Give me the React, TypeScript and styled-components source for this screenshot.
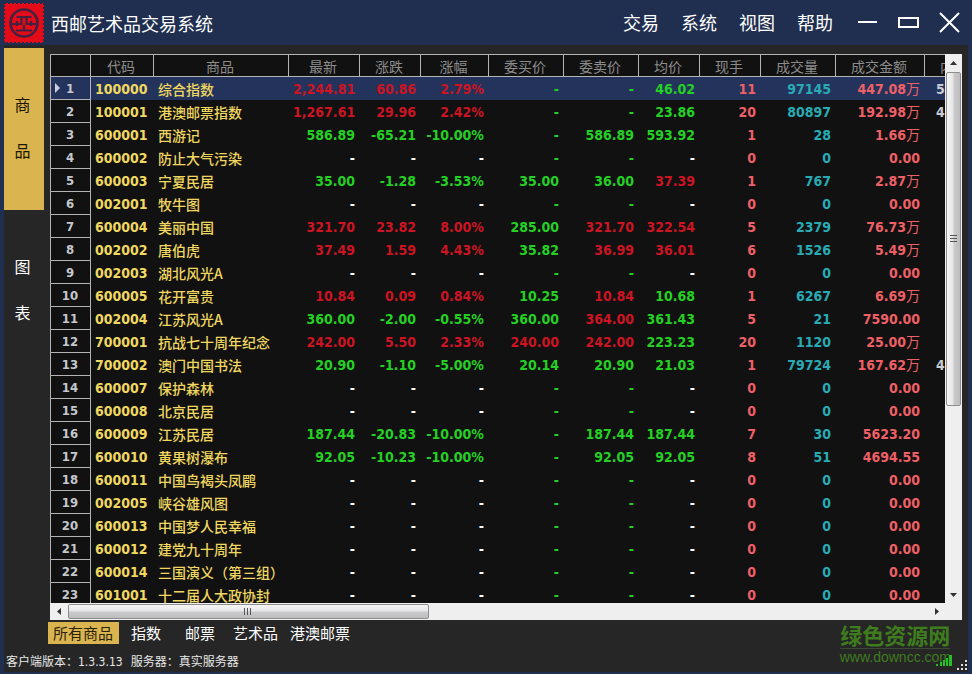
import React from "react";
import styled, { createGlobalStyle } from "styled-components";

const cjk = `"Noto Sans CJK SC", sans-serif`;

const GlobalStyle = createGlobalStyle`
  * { box-sizing: border-box; }
  body { margin: 0; background: #202f50; font-family: ${cjk}; }
  button { font-family: inherit; border: 0; padding: 0; margin: 0; background: none; color: inherit; }
`;

const Window = styled.div`
  height: 100vh;
  display: flex;
  flex-direction: column;
  padding: 0 4px 2px;
  background: #202f50;
  color: #fff;
  overflow: hidden;
`;

const TitleBar = styled.header`
  height: 45px;
  flex: none;
  display: flex;
  align-items: center;
  padding-right: 7px;
  svg { display: block; }
`;

const Title = styled.h1`
  margin: 0 auto 0 7px;
  font-size: 18px;
  line-height: 24px;
  font-weight: 400;
`;

const Menu = styled.nav`
  display: flex;
  gap: 22px;
  margin-right: 24px;
  padding-bottom: 2px;
  button { font-size: 18px; line-height: 24px; }
`;

const WindowButtons = styled.div`
  display: flex;
  gap: 20px;
`;

const Content = styled.div`
  flex: 1;
  min-height: 0;
  display: flex;
  gap: 6px;
  padding: 3px 6px 0 0;
  background: #262626;
`;

const SideBar = styled.nav`
  width: 40px;
  flex: none;
  display: flex;
  flex-direction: column;
`;

const SideTab = styled.button<{ $active?: boolean }>`
  height: 162px;
  display: flex;
  flex-direction: column;
  align-items: center;
  justify-content: center;
  padding: 0 3px 4px 0;
  font-size: 16px;
  line-height: 46px;
  background: ${(p) => (p.$active ? "#d9b44f" : "transparent")};
  color: ${(p) => (p.$active ? "#1c1808" : "#fff")};
`;

const GridFrame = styled.main`
  flex: 1;
  min-width: 0;
  margin-top: 6px;
  display: grid;
  grid-template-columns: minmax(0, 1fr) 17px;
  grid-template-rows: minmax(0, 1fr) 17px;
  background: #efefef;
`;

const GridView = styled.div`
  overflow: hidden;
  background: #111;
`;

const Quotes = styled.table`
  width: 936px;
  table-layout: fixed;
  border-collapse: separate;
  border-spacing: 0;
  font-family: "DejaVu Sans Condensed", "DejaVu Sans", ${cjk};
  font-size: 14px;
  line-height: 22px;
  white-space: nowrap;
`;

const HeadCell = styled.th`
  height: 23px;
  padding: 1px 2px 0 0;
  line-height: 20px;
  font-family: ${cjk};
  font-weight: 400;
  color: #8c8c8c;
  border: solid #b4b4b4;
  border-width: 1px 1px 1px 0;
  &:first-child { border-left-width: 1px; }
`;

const Row = styled.tr<{ $selected?: boolean }>`
  height: 23px;
  background: ${(p) => (p.$selected ? "#24335c" : "transparent")};
`;

const RowHead = styled.th`
  position: relative;
  padding: 2px 1px 0 0;
  font-size: 13px;
  line-height: 20px;
  color: #c4c8ce;
  border: solid #b4b4b4;
  border-width: 0 1px 1px;
`;

const Marker = styled.svg`
  position: absolute;
  left: 4px;
  top: 6px;
`;

const tones = {
  y: "#f0d860",
  r: "#cc1422",
  g: "#24d024",
  w: "#ffffff",
  p: "#ee6066",
  c: "#28abb4",
  s: "#c8ccd4",
};
type Tone = keyof typeof tones;

const Cell = styled.td<{ $tone: Tone; $left?: boolean }>`
  padding: 0 5px 0 4px;
  font-weight: 700;
  text-align: ${(p) => (p.$left ? "left" : "right")};
  color: ${(p) => tones[p.$tone]};
`;

const NameCell = styled(Cell)`
  font-family: ${cjk};
  font-weight: 500;
`;

const InnerCell = styled(Cell)`
  padding-left: 11px;
`;

const Unit = styled.span`
  font-family: ${cjk};
  font-weight: 400;
`;

const VScroll = styled.div`
  display: flex;
  flex-direction: column;
`;

const HScroll = styled.div`
  display: flex;
  grid-column: 1;
`;

const ArrowButton = styled.button`
  width: 17px;
  height: 17px;
  flex: none;
  display: grid;
  place-items: center;
`;

const Track = styled.div<{ $vertical?: boolean }>`
  flex: 1;
  display: flex;
  flex-direction: ${(p) => (p.$vertical ? "column" : "row")};
  padding: ${(p) => (p.$vertical ? "1px 1px 0" : "1px 1px")};
`;

const Thumb = styled.button<{ $vertical?: boolean }>`
  width: ${(p) => (p.$vertical ? "15px" : "42%")};
  height: ${(p) => (p.$vertical ? "65%" : "15px")};
  display: grid;
  place-items: center;
  border: 1px solid #8e8e8e;
  border-radius: 2px;
  background: linear-gradient(${(p) => (p.$vertical ? "90deg" : "180deg")}, #f6f6f6, #e6e6e6 45%, #cacace 55%, #bdbdbd);
`;

const Footer = styled.footer`
  flex: none;
  position: relative;
  background: #262626;
`;

const Tabs = styled.nav`
  display: flex;
  align-items: center;
  height: 28px;
  padding: 2px 0 4px 44px;
`;

const Tab = styled.button<{ $active?: boolean; $wide?: boolean }>`
  height: 22px;
  padding: 0 ${(p) => (p.$active ? 6 : p.$wide ? 12 : 6)}px 0 ${(p) => (p.$active ? 5 : p.$wide ? 12 : 6)}px;
  font-size: 15px;
  line-height: 22px;
  background: ${(p) => (p.$active ? "#d9b44f" : "transparent")};
  color: ${(p) => (p.$active ? "#2a2210" : "#fff")};
`;

const Status = styled.div`
  display: flex;
  gap: 8px;
  padding: 5px 2px 1px;
  height: 24px;
  font-family: "DejaVu Sans Condensed", ${cjk};
  font-size: 12px;
  line-height: 18px;
  color: #e8e8e8;
`;

const Watermark = styled.a`
  position: absolute;
  right: 17px;
  top: 0;
  display: flex;
  flex-direction: column;
  align-items: center;
  color: #3e7c1e;
  text-decoration: none;
`;

const WatermarkName = styled.strong`
  font-size: 22px;
  line-height: 28px;
  border-bottom: 1px solid #3c4a34;
`;

const WatermarkSite = styled.span`
  font-family: "Liberation Sans", sans-serif;
  font-size: 14px;
  line-height: 16px;
`;

const Signal = styled.svg`
  position: absolute;
  right: 15px;
  bottom: 5px;
`;

const Grip = styled.svg`
  position: absolute;
  right: 0;
  bottom: 1px;
`;

const columns: [string, number][] = [
  ["", 41], ["代码", 63], ["商品", 135], ["最新", 71], ["涨跌", 61], ["涨幅", 68],
  ["委买价", 75], ["委卖价", 75], ["均价", 61], ["现手", 61], ["成交量", 75], ["成交金额", 89], ["内盘", 61],
];

type Quote = {
  code: string; name: string;
  trend: Tone; last: string; change: string; percent: string;
  bidTone: Tone; bid: string; askTone: Tone; ask: string; avgTone: Tone; avg: string;
  lots: string; volume: string; amount: string; inner?: string;
};

const idle = (code: string, name: string): Quote => ({
  code, name, trend: "w", last: "-", change: "-", percent: "-",
  bidTone: "g", bid: "-", askTone: "g", ask: "-", avgTone: "w", avg: "-",
  lots: "0", volume: "0", amount: "0.00",
});

const quote = (
  code: string, name: string, trend: Tone, last: string, change: string, percent: string,
  bidTone: Tone, bid: string, askTone: Tone, ask: string, avgTone: Tone, avg: string,
  lots: string, volume: string, amount: string, inner?: string,
): Quote => ({ code, name, trend, last, change, percent, bidTone, bid, askTone, ask, avgTone, avg, lots, volume, amount, inner });

const quotes: Quote[] = [
  quote("100000", "综合指数", "r", "2,244.81", "60.86", "2.79%", "g", "-", "g", "-", "g", "46.02", "11", "97145", "447.08万", "5"),
  quote("100001", "港澳邮票指数", "r", "1,267.61", "29.96", "2.42%", "g", "-", "g", "-", "g", "23.86", "20", "80897", "192.98万", "4"),
  quote("600001", "西游记", "g", "586.89", "-65.21", "-10.00%", "g", "-", "g", "586.89", "g", "593.92", "1", "28", "1.66万"),
  idle("600002", "防止大气污染"),
  quote("600003", "宁夏民居", "g", "35.00", "-1.28", "-3.53%", "g", "35.00", "g", "36.00", "r", "37.39", "1", "767", "2.87万"),
  idle("002001", "牧牛图"),
  quote("600004", "美丽中国", "r", "321.70", "23.82", "8.00%", "g", "285.00", "r", "321.70", "r", "322.54", "5", "2379", "76.73万"),
  quote("002002", "唐伯虎", "r", "37.49", "1.59", "4.43%", "g", "35.82", "r", "36.99", "r", "36.01", "6", "1526", "5.49万"),
  idle("002003", "湖北风光A"),
  quote("600005", "花开富贵", "r", "10.84", "0.09", "0.84%", "g", "10.25", "r", "10.84", "g", "10.68", "1", "6267", "6.69万"),
  quote("002004", "江苏风光A", "g", "360.00", "-2.00", "-0.55%", "g", "360.00", "r", "364.00", "g", "361.43", "5", "21", "7590.00"),
  quote("700001", "抗战七十周年纪念", "r", "242.00", "5.50", "2.33%", "r", "240.00", "r", "242.00", "g", "223.23", "20", "1120", "25.00万"),
  quote("700002", "澳门中国书法", "g", "20.90", "-1.10", "-5.00%", "g", "20.14", "g", "20.90", "g", "21.03", "1", "79724", "167.62万", "4"),
  idle("600007", "保护森林"),
  idle("600008", "北京民居"),
  quote("600009", "江苏民居", "g", "187.44", "-20.83", "-10.00%", "g", "-", "g", "187.44", "g", "187.44", "7", "30", "5623.20"),
  quote("600010", "黄果树瀑布", "g", "92.05", "-10.23", "-10.00%", "g", "-", "g", "92.05", "g", "92.05", "8", "51", "4694.55"),
  idle("600011", "中国鸟褐头凤鹛"),
  idle("002005", "峡谷雄风图"),
  idle("600013", "中国梦人民幸福"),
  idle("600012", "建党九十周年"),
  idle("600014", "三国演义（第三组）"),
  idle("601001", "十二届人大政协封"),
];

const Logo = () => (
  <svg width="40" height="40" viewBox="0 0 40 40" aria-hidden="true">
    <rect width="40" height="40" fill="#e40b18" />
    <rect width="40" height="40" fill="none" stroke="#202f50" strokeWidth="2" strokeDasharray="2 2" />
    <g fill="none" stroke="#45203f" strokeWidth="2.6">
      <circle cx="20" cy="20" r="13.5" />
      <path d="M12.500 14h15M17.500 14v8M22.500 14v8M8 21h9.500M22.500 21H32M13 18v5M27 18v5M20 22v6M12 27.500h16" strokeWidth="2.200" />
    </g>
  </svg>
);

export default function App() {
  return (
    <Window>
      <GlobalStyle />
      <TitleBar>
        <Logo />
        <Title>西邮艺术品交易系统</Title>
        <Menu>
          {["交易", "系统", "视图", "帮助"].map((m) => <button key={m}>{m}</button>)}
        </Menu>
        <WindowButtons>
          <button aria-label="最小化">
            <svg width="21" height="22"><path d="M1 10h19" stroke="#fff" strokeWidth="2" /></svg>
          </button>
          <button aria-label="最大化">
            <svg width="21" height="22"><rect x="1" y="6" width="19" height="9" fill="none" stroke="#fff" strokeWidth="2" /></svg>
          </button>
          <button aria-label="关闭">
            <svg width="22" height="22"><path d="M1 1l19 19M20 1L1 20" stroke="#fff" strokeWidth="2" /></svg>
          </button>
        </WindowButtons>
      </TitleBar>

      <Content>
        <SideBar>
          <SideTab $active><span>商</span><span>品</span></SideTab>
          <SideTab><span>图</span><span>表</span></SideTab>
        </SideBar>
        <GridFrame>
          <GridView>
            <Quotes>
              <colgroup>{columns.map(([label, width]) => <col key={label} width={width} />)}</colgroup>
              <thead>
                <tr>{columns.map(([label]) => <HeadCell key={label} scope="col">{label}</HeadCell>)}</tr>
              </thead>
              <tbody>
                {quotes.map((q, i) => (
                  <Row key={q.code} $selected={i === 0}>
                    <RowHead scope="row">
                      {i === 0 && <Marker width="6" height="10"><path d="M0 0l5 5-5 5z" fill="#c8d0e0" /></Marker>}
                      {i + 1}
                    </RowHead>
                    <Cell $tone="y" $left>{q.code}</Cell>
                    <NameCell $tone="y" $left>{q.name}</NameCell>
                    <Cell $tone={q.trend}>{q.last}</Cell>
                    <Cell $tone={q.trend}>{q.change}</Cell>
                    <Cell $tone={q.trend}>{q.percent}</Cell>
                    <Cell $tone={q.bidTone}>{q.bid}</Cell>
                    <Cell $tone={q.askTone}>{q.ask}</Cell>
                    <Cell $tone={q.avgTone}>{q.avg}</Cell>
                    <Cell $tone="p">{q.lots}</Cell>
                    <Cell $tone="c">{q.volume}</Cell>
                    <Cell $tone="p">{q.amount.replace("万", "")}{q.amount.endsWith("万") && <Unit>万</Unit>}</Cell>
                    <InnerCell $tone="s" $left>{q.inner}</InnerCell>
                  </Row>
                ))}
              </tbody>
            </Quotes>
          </GridView>
          <VScroll>
            <ArrowButton aria-label="向上滚动"><svg width="7" height="4"><path d="M0 4l3.500-4L7 4z" fill="#333" /></svg></ArrowButton>
            <Track $vertical>
              <Thumb $vertical aria-label="垂直滚动条"><svg width="7" height="8"><path d="M0 .5h7M0 3.500h7M0 6.500h7" stroke="#555" /></svg></Thumb>
            </Track>
            <ArrowButton aria-label="向下滚动"><svg width="7" height="4"><path d="M0 0l3.500 4L7 0z" fill="#333" /></svg></ArrowButton>
          </VScroll>
          <HScroll>
            <ArrowButton aria-label="向左滚动"><svg width="4" height="7"><path d="M4 0L0 3.500 4 7z" fill="#333" /></svg></ArrowButton>
            <Track>
              <Thumb aria-label="水平滚动条"><svg width="8" height="7"><path d="M.5 0v7M3.500 0v7M6.500 0v7" stroke="#555" /></svg></Thumb>
            </Track>
            <ArrowButton aria-label="向右滚动"><svg width="4" height="7"><path d="M0 0l4 3.500L0 7z" fill="#333" /></svg></ArrowButton>
          </HScroll>
        </GridFrame>
      </Content>

      <Footer>
        <Tabs>
          <Tab $active>所有商品</Tab>
          <Tab $wide>指数</Tab>
          <Tab $wide>邮票</Tab>
          <Tab>艺术品</Tab>
          <Tab>港澳邮票</Tab>
        </Tabs>
        <Status>
          <span>客户端版本：1.3.3.13</span>
          <span>服务器：真实服务器</span>
        </Status>
        <Watermark href="#">
          <WatermarkName>绿色资源网</WatermarkName>
          <WatermarkSite>www.downcc.com</WatermarkSite>
        </Watermark>
        <Signal width="17" height="13">
          <path d="M0 10h2v2H0zM4 8h2v4H4zM7 6h2v6H7zM10 4h2v8h-2zM13 1h3v11h-3z" fill="#22c020" />
        </Signal>
        <Grip width="12" height="12">
          <path d="M9 1h2v2H9zM5 5h2v2H5zM9 5h2v2H9zM1 9h2v2H1zM5 9h2v2H5zM9 9h2v2H9z" fill="#e0e0e0" />
        </Grip>
      </Footer>
    </Window>
  );
}
